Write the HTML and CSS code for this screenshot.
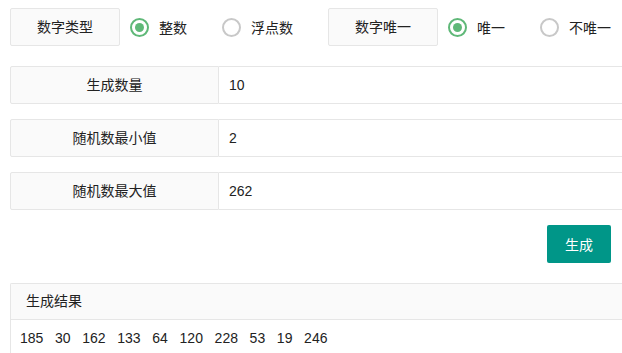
FILE: index.html
```html
<!DOCTYPE html>
<html lang="zh-CN">
<head>
    <meta charset="UTF-8">
    <meta name="viewport" content="width=device-width, initial-scale=1.0">
    <title>随机数生成</title>
    <link rel="stylesheet" href="styles.css">
</head>
<body>

<div class="page">
    <div class="options">
        <div class="opt-label">数字类型</div>
        <label class="radio checked"><span class="dot"></span>整数</label>
        <label class="radio"><span class="dot"></span>浮点数</label>

        <div class="opt-label">数字唯一</div>
        <label class="radio checked"><span class="dot"></span>唯一</label>
        <label class="radio"><span class="dot"></span>不唯一</label>
    </div>

    <div class="field">
        <div class="field-label">生成数量</div>
        <div class="field-input">10</div>
    </div>
    <div class="field">
        <div class="field-label">随机数最小值</div>
        <div class="field-input">2</div>
    </div>
    <div class="field">
        <div class="field-label">随机数最大值</div>
        <div class="field-input">262</div>
    </div>

    <div class="actions">
        <button class="btn">生成</button>
    </div>

    <div class="result">
        <div class="result-head">生成结果</div>
        <div class="result-body" id="resultBody"></div>
    </div>
</div>

<script>
    // numbers from the last run
    const nums = [185, 30, 162, 133, 64, 120, 228, 53, 19, 246];
    document.getElementById('resultBody').textContent = nums.join('\u00a0\u00a0\u00a0');
</script>

</body>
</html>
```

FILE: styles.css
```css
html, body {
    margin: 0;
    overflow: hidden;
}
body {
    font-family: "Liberation Sans", "Noto Sans CJK SC", sans-serif;
    font-size: 14px;
    color: #222;
    background: #fff;
}
.page {
    padding: 8px 0 0 10px;
}
.options {
    display: flex;
    align-items: center;
    height: 38px;
    margin-bottom: 20px;
}
.opt-label {
    box-sizing: border-box;
    width: 110px;
    height: 38px;
    line-height: 36px;
    text-align: center;
    background: #fafafa;
    border: 1px solid #e6e6e6;
    border-radius: 2px;
    margin-right: 10px;
}
.radio {
    display: flex;
    align-items: center;
    margin-right: 35px;
    cursor: pointer;
}
.radio:last-child {
    margin-right: 0;
}
.dot {
    box-sizing: border-box;
    width: 19px;
    height: 19px;
    border: 2px solid #c8c8c8;
    border-radius: 50%;
    margin-right: 10px;
    display: flex;
    align-items: center;
    justify-content: center;
}
.radio.checked .dot {
    border-color: #5fb878;
}
.radio.checked .dot::after {
    content: "";
    width: 9px;
    height: 9px;
    border-radius: 50%;
    background: #5fb878;
}
.field {
    display: flex;
    height: 38px;
    margin-bottom: 15px;
}
.field-label {
    box-sizing: border-box;
    width: 209px;
    line-height: 36px;
    text-align: center;
    background: #fafafa;
    border: 1px solid #e6e6e6;
    border-radius: 2px 0 0 2px;
}
.field-input {
    flex: 1;
    box-sizing: border-box;
    line-height: 36px;
    padding-left: 10px;
    border: 1px solid #e6e6e6;
    border-left: none;
    border-right: none;
}
.actions {
    display: flex;
    justify-content: flex-end;
    padding-right: 11px;
}
.btn {
    height: 38px;
    padding: 0 18px;
    border: none;
    border-radius: 2px;
    background: #009688;
    color: #fff;
    font-family: inherit;
    font-size: 14px;
    cursor: pointer;
}
.result {
    margin-top: 20px;
    border: 1px solid #e6e6e6;
    border-right: none;
    border-radius: 2px 0 0 2px;
}
.result-head {
    height: 35px;
    line-height: 35px;
    padding-left: 15px;
    background: #fafafa;
    border-bottom: 1px solid #e6e6e6;
}
.result-body {
    padding: 8px 9px;
    line-height: 20px;
}
```
